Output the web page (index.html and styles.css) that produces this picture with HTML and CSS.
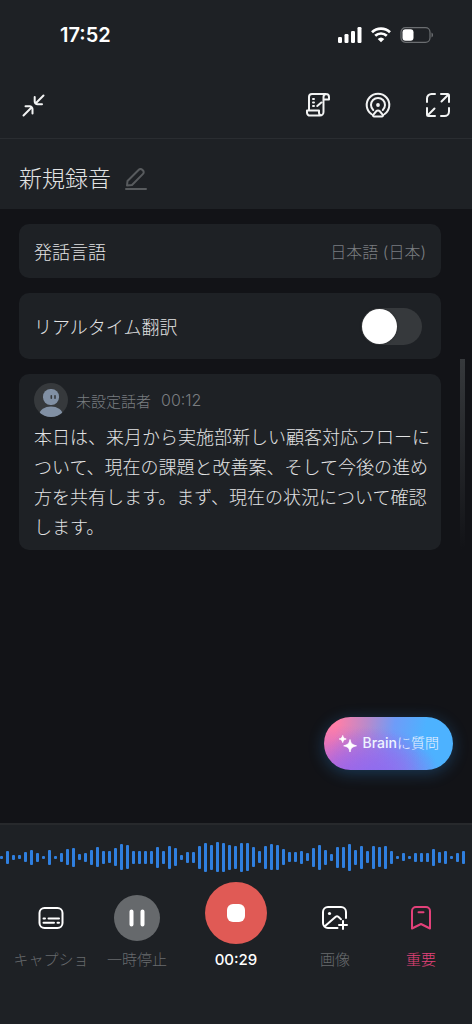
FILE: index.html
```
<!DOCTYPE html>
<html lang="ja">
<head>
<meta charset="utf-8">
<meta name="viewport" content="width=device-width, initial-scale=1">
<title>新規録音</title>
<link rel="stylesheet" href="styles.css">
</head>
<body>
<div class="app">
  <header class="header">
    <div class="status">
      <time class="clock">17:52</time>
      <div class="status-icons">
        <svg width="24" height="16" viewBox="0 0 24 16" fill="#fff"><rect x="0" y="10" width="4" height="6" rx="1.2"/><rect x="6.5" y="7" width="4" height="9" rx="1.2"/><rect x="13" y="4" width="4" height="12" rx="1.2"/><rect x="19.500" y="0" width="4" height="16" rx="1.2"/></svg>
        <svg width="20" height="16" viewBox="0 0 20 16" fill="none" stroke="#fff" stroke-width="2.700"><path d="M1 5.300a13 13 0 0 1 18 0"/><path d="M4.200 8.800a8.400 8.400 0 0 1 11.600 0"/><path d="M10 15.300 6.700 12a4.800 4.800 0 0 1 6.600 0z" fill="#fff" stroke="none"/></svg>
        <svg width="34" height="16" viewBox="0 0 34 16"><rect x="1" y=".7" width="29" height="14.600" rx="4.500" fill="none" stroke="#6b6e71" stroke-width="1.200"/><rect x="2.500" y="2.300" width="11" height="11.400" rx="3" fill="#fff"/><path d="M31.500 5.500c2 .8 2 4.200 0 5z" fill="#6b6e71"/></svg>
      </div>
    </div>
    <nav class="toolbar">
      <button class="icon-button" aria-label="縮小"><svg width="24" height="24" viewBox="0 0 24 24"><path d="M21.500 2.500 13.500 10.500M12.700 4v4.500a2.800 2.800 0 0 0 2.800 2.800H20M1.500 22.500 9.500 14.500M3.500 13.300H7.700a2.800 2.800 0 0 1 2.800 2.800V20.500"/></svg></button>
      <div class="toolbar-end">
        <button class="icon-button" aria-label="要約"><svg width="24" height="24" viewBox="0 0 24 24"><path d="M3 17V4a3 3 0 0 1 3-3h14M20 1a3 3 0 0 0-2.500 3v15a3.600 3.600 0 0 1-3.600 3.600H4A3 3 0 0 1 1 19.500V17.500H13v2.500a2.600 2.600 0 0 0 2.600 2.300M20 1a3 3 0 0 1 3 3v2.500H17.500M7 6h1M7 9.500h1M7 13h1M11.300 13l4-3.500"/></svg></button>
        <button class="icon-button" aria-label="配信"><svg width="26" height="26" viewBox="0 0 26 26"><path d="M6.600 22.300A11.300 11.300 0 1 1 19.400 22.300M8.200 18A7 7 0 1 1 17.800 18M11 19.500 8.200 22.800A1 1 0 0 0 9 24.500h8a1 1 0 0 0 .8-1.700L15 19.500a2.700 2.700 0 0 0-4 0z"/><circle cx="13" cy="13" r="1.900" class="solid"/></svg></button>
        <button class="icon-button" aria-label="全画面"><svg width="24" height="24" viewBox="0 0 24 24"><path d="M1 9V5.500A4.500 4.500 0 0 1 5.500 1H9M15 1h6.500A1.500 1.500 0 0 1 23 2.500V9M22 2 15.500 8.500M1 15v6.500A1.500 1.500 0 0 0 2.500 23H9M2 22 8.500 15.500M23 15v3.500a4.500 4.500 0 0 1-4.500 4.500H15"/></svg></button>
      </div>
    </nav>
    <div class="title-row">
      <h1 class="title">新規録音</h1>
      <button class="edit" aria-label="名前を編集"><svg width="22" height="22" viewBox="0 0 22 22"><path d="M2 17.500 2.500 13 13.800 1.700a2.400 2.400 0 0 1 3.400 0l.8.8a2.400 2.400 0 0 1 0 3.400L7 17zM1 21h20"/></svg></button>
    </div>
  </header>

  <main class="content">
    <button class="card language"><span class="card-label">発話言語</span><span class="card-value">日本語 (日本)</span></button>
    <label class="card translate"><span class="card-label">リアルタイム翻訳</span><input class="switch" type="checkbox" role="switch"></label>
    <article class="card transcript">
      <div class="speaker">
        <svg class="avatar" width="34" height="34" viewBox="0 0 34 34"><clipPath id="disc"><circle cx="17" cy="17" r="17"/></clipPath><g clip-path="url(#disc)"><path fill="#36393c" d="M0 0h34v34H0z"/><rect x="9" y="6" width="16" height="16" rx="7.500" fill="#8190a4"/><ellipse cx="17" cy="31.500" rx="11.500" ry="8" fill="#8190a4"/><path d="M17.300 12.700v2.500M21 12.700v2.500" stroke="#36393c" stroke-width="1.600" stroke-linecap="round"/></g></svg>
        <span>未設定話者</span><time>00:12</time>
      </div>
      <p class="speech">本日は、来月から実施部新しい顧客対応フローについて、現在の課題と改善案、そして今後の進め方を共有します。まず、現在の状況について確認します。</p>
    </article>
    <div class="scrollbar"></div>
    <button class="ask"><svg width="18" height="18" viewBox="0 0 18 18" fill="#fff"><path d="M11 4.500c1 4.200 1.800 5 6.500 6.300-4.700 1.200-5.500 2-6.500 6.200-1-4.200-1.800-5-6.300-6.200C9.200 9.500 10 8.700 11 4.500zM3.700.5c.6 2.300 1.100 2.800 3.500 3.500-2.400.7-2.900 1.200-3.500 3.500C3.100 5.200 2.600 4.700.2 4c2.400-.7 2.900-1.200 3.500-3.500z" stroke="#fff" stroke-width=".8" stroke-linejoin="round"/></svg><span class="ask-label"><b>Brain</b>に質問</span></button>
  </main>

  <footer class="footer">
    <div class="wave" id="wave"></div>
    <div class="controls">
      <button class="control"><span class="control-icon"><svg width="26" height="22" viewBox="0 0 26 22"><rect x="1.500" y="1" width="23" height="20" rx="5"/><path d="M5.500 11.500h1.500M10.500 11.500h10.500M5.500 15.800h10.500M19.500 15.800h1.500"/></svg></span><span>キャプショ</span></button>
      <button class="control"><span class="control-icon"><span class="pause"><svg width="16" height="18" viewBox="0 0 16 18"><path d="M2.500 2.500v13M13.500 2.500v13" stroke-width="4"/></svg></span></span><span>一時停止</span></button>
      <button class="control record"><span class="control-icon"><span class="stop"></span></span><span>00:29</span></button>
      <button class="control"><span class="control-icon"><svg width="26" height="24" viewBox="0 0 26 24"><path d="M24 12V6a5 5 0 0 0-5-5H6a5 5 0 0 0-5 5v11a5 5 0 0 0 5 5h9.500M2.500 20.500 13.700 10.800a2 2 0 0 1 2.600 0L19 13.200M17 19h8M21 15v8"/><circle cx="7.500" cy="7.500" r="1.600" class="solid"/></svg></span><span>画像</span></button>
      <button class="control important"><span class="control-icon"><svg width="20" height="24" viewBox="0 0 20 24"><path d="M1 22.500V5a4 4 0 0 1 4-4h10a4 4 0 0 1 4 4v17.500l-9-4.500zM7.500 6.200h5"/></svg></span><span>重要</span></button>
    </div>
  </footer>
</div>
<script src="wave.js"></script>
</body>
</html>
```
FILE: styles.css
```
* { box-sizing: border-box; }
body {
  margin: 0;
  background: #121317;
  color: #e2e3e4;
  font-family: Inter, "Noto Sans CJK JP Light", "Noto Sans CJK JP", sans-serif;
  font-weight: 300;
}
button {
  margin: 0;
  padding: 0;
  border: 0;
  background: none;
  color: inherit;
  font: inherit;
}
svg { display: block; flex: none; }
.app { display: flex; flex-direction: column; min-height: 100vh; }
.header { background: #1e2125; }
.status {
  display: flex;
  align-items: center;
  justify-content: space-between;
  height: 70px;
  padding: 0 38px 0 60px;
}
.clock { color: #fff; font-size: 20px; font-weight: 600; }
.status-icons { display: flex; align-items: center; gap: 9px; }
.toolbar {
  display: flex;
  align-items: center;
  justify-content: space-between;
  height: 69px;
  padding: 2px 20px 0;
  border-bottom: 1px solid #2a2d31;
}
.toolbar-end { display: flex; gap: 32px; }
.icon-button { display: grid; place-items: center; width: 28px; height: 28px; }
.icon-button svg, .control svg, .edit svg {
  fill: none;
  stroke: currentColor;
  stroke-width: 2;
  stroke-linecap: round;
  stroke-linejoin: round;
}
.icon-button { color: #f2f3f3; }
svg .solid { fill: currentColor; stroke: none; }
.title-row {
  display: flex;
  align-items: center;
  gap: 14px;
  height: 70px;
  padding: 10px 19px 0;
}
.title { margin: 0; font-size: 23px; line-height: 32px; font-weight: 300; }
.edit { color: #585b5e; }

.content {
  position: relative;
  display: flex;
  flex: 1;
  flex-direction: column;
  gap: 15px;
  padding: 15px 31px 15px 19px;
}
.card { border-radius: 10px; background: #1e2125; }
.language, .translate {
  display: flex;
  align-items: center;
  justify-content: space-between;
  padding: 0 15px;
}
.language { height: 54px; }
.translate { height: 66px; padding-right: 19px; }
.card-label { font-size: 18px; }
.card-value { color: #7a7d80; font-size: 16px; }
.switch {
  appearance: none;
  width: 61px;
  height: 37px;
  margin: 0;
  padding: 1px;
  border-radius: 19px;
  background: #36393c;
}
.switch::before {
  content: "";
  display: block;
  width: 35px;
  height: 35px;
  border-radius: 50%;
  background: #fff;
  box-shadow: 0 0 3px #0005;
}
.switch:checked::before { margin-left: auto; }
.transcript { padding: 9px 10px 7px 15px; }
.speaker {
  display: flex;
  align-items: center;
  gap: 8px;
  height: 34px;
  color: #7a7d80;
  font-size: 15px;
}
.speaker time { margin-left: 2px; font-size: 16px; }
.speech { margin: 6px 0 0; font-size: 18px; line-height: 30px; }
.scrollbar {
  position: absolute;
  top: 150px;
  right: 7px;
  width: 5px;
  height: 190px;
  background: linear-gradient(#36393c, #121317);
}
.ask {
  position: absolute;
  right: 19px;
  bottom: 53px;
  display: flex;
  align-items: center;
  gap: 6px;
  height: 53px;
  padding: 0 14px 0 15px;
  border-radius: 27px;
  background:
    radial-gradient(ellipse at 40% 115%, #8c6cf0 0%, #8c6cf000 60%),
    radial-gradient(ellipse at 18% 105%, #b060e0 0%, #b060e000 60%),
    linear-gradient(100deg, #ff7fa8 10%, #b98acb 32%, #6e9cf8 52%, #4db2ff 75%);
  box-shadow: 0 3px 16px #2c86d955;
  color: #eef4ff;
  font-size: 14px;
  white-space: nowrap;
}
.ask-label { padding-bottom: 4px; }
.ask-label b { font-weight: 500; }

.footer {
  min-height: 201px;
  border-top: 2px solid #27292c;
  background: #1e2125;
}
.wave {
  display: flex;
  align-items: center;
  gap: 3px;
  height: 32px;
  margin-top: 16px;
  overflow: hidden;
}
.wave span { flex: none; width: 3px; border-radius: 1px; background: #2f7fdf; }
.controls {
  display: grid;
  grid-template-columns: 1fr 1fr 112px 1fr 1fr;
  margin-top: 9px;
  padding: 0 8px;
}
.control {
  display: flex;
  flex-direction: column;
  align-items: center;
  gap: 5px;
  color: #686b6e;
  font-size: 15px;
  line-height: 22px;
  white-space: nowrap;
}
.control-icon {
  display: grid;
  place-items: center;
  height: 62px;
  padding-top: 10px;
  color: #fff;
}
.pause {
  display: grid;
  place-items: center;
  width: 46px;
  height: 46px;
  border-radius: 50%;
  background: #66696c;
}
.record { color: #fff; font-weight: 500; }
.record .control-icon {
  width: 62px;
  padding: 0;
  border-radius: 50%;
  background: #e05a55;
}
.stop { width: 18px; height: 18px; border-radius: 6px; background: #fff; }
.important, .important .control-icon { color: #e3417a; }
```
FILE: wave.js
```
const levels = [
  3, 13, 5, 4, 10, 15, 9, 3, 15, 3, 9, 16, 19, 6, 9, 15, 20, 13, 12, 18,
  26, 24, 13, 13, 13, 13, 21, 13, 23, 18, 5, 11, 11, 23, 29, 25, 30, 29, 25, 23,
  29, 28, 20, 12, 23, 26, 25, 16, 10, 10, 13, 8, 19, 25, 15, 7, 21, 21, 27, 15,
  23, 12, 23, 20, 23, 13, 3, 8, 3, 9, 9, 9, 17, 11, 13, 3, 9, 13
];
const wave = document.getElementById("wave");
for (const level of levels) {
  const bar = document.createElement("span");
  bar.style.height = level + "px";
  wave.append(bar);
}
```
